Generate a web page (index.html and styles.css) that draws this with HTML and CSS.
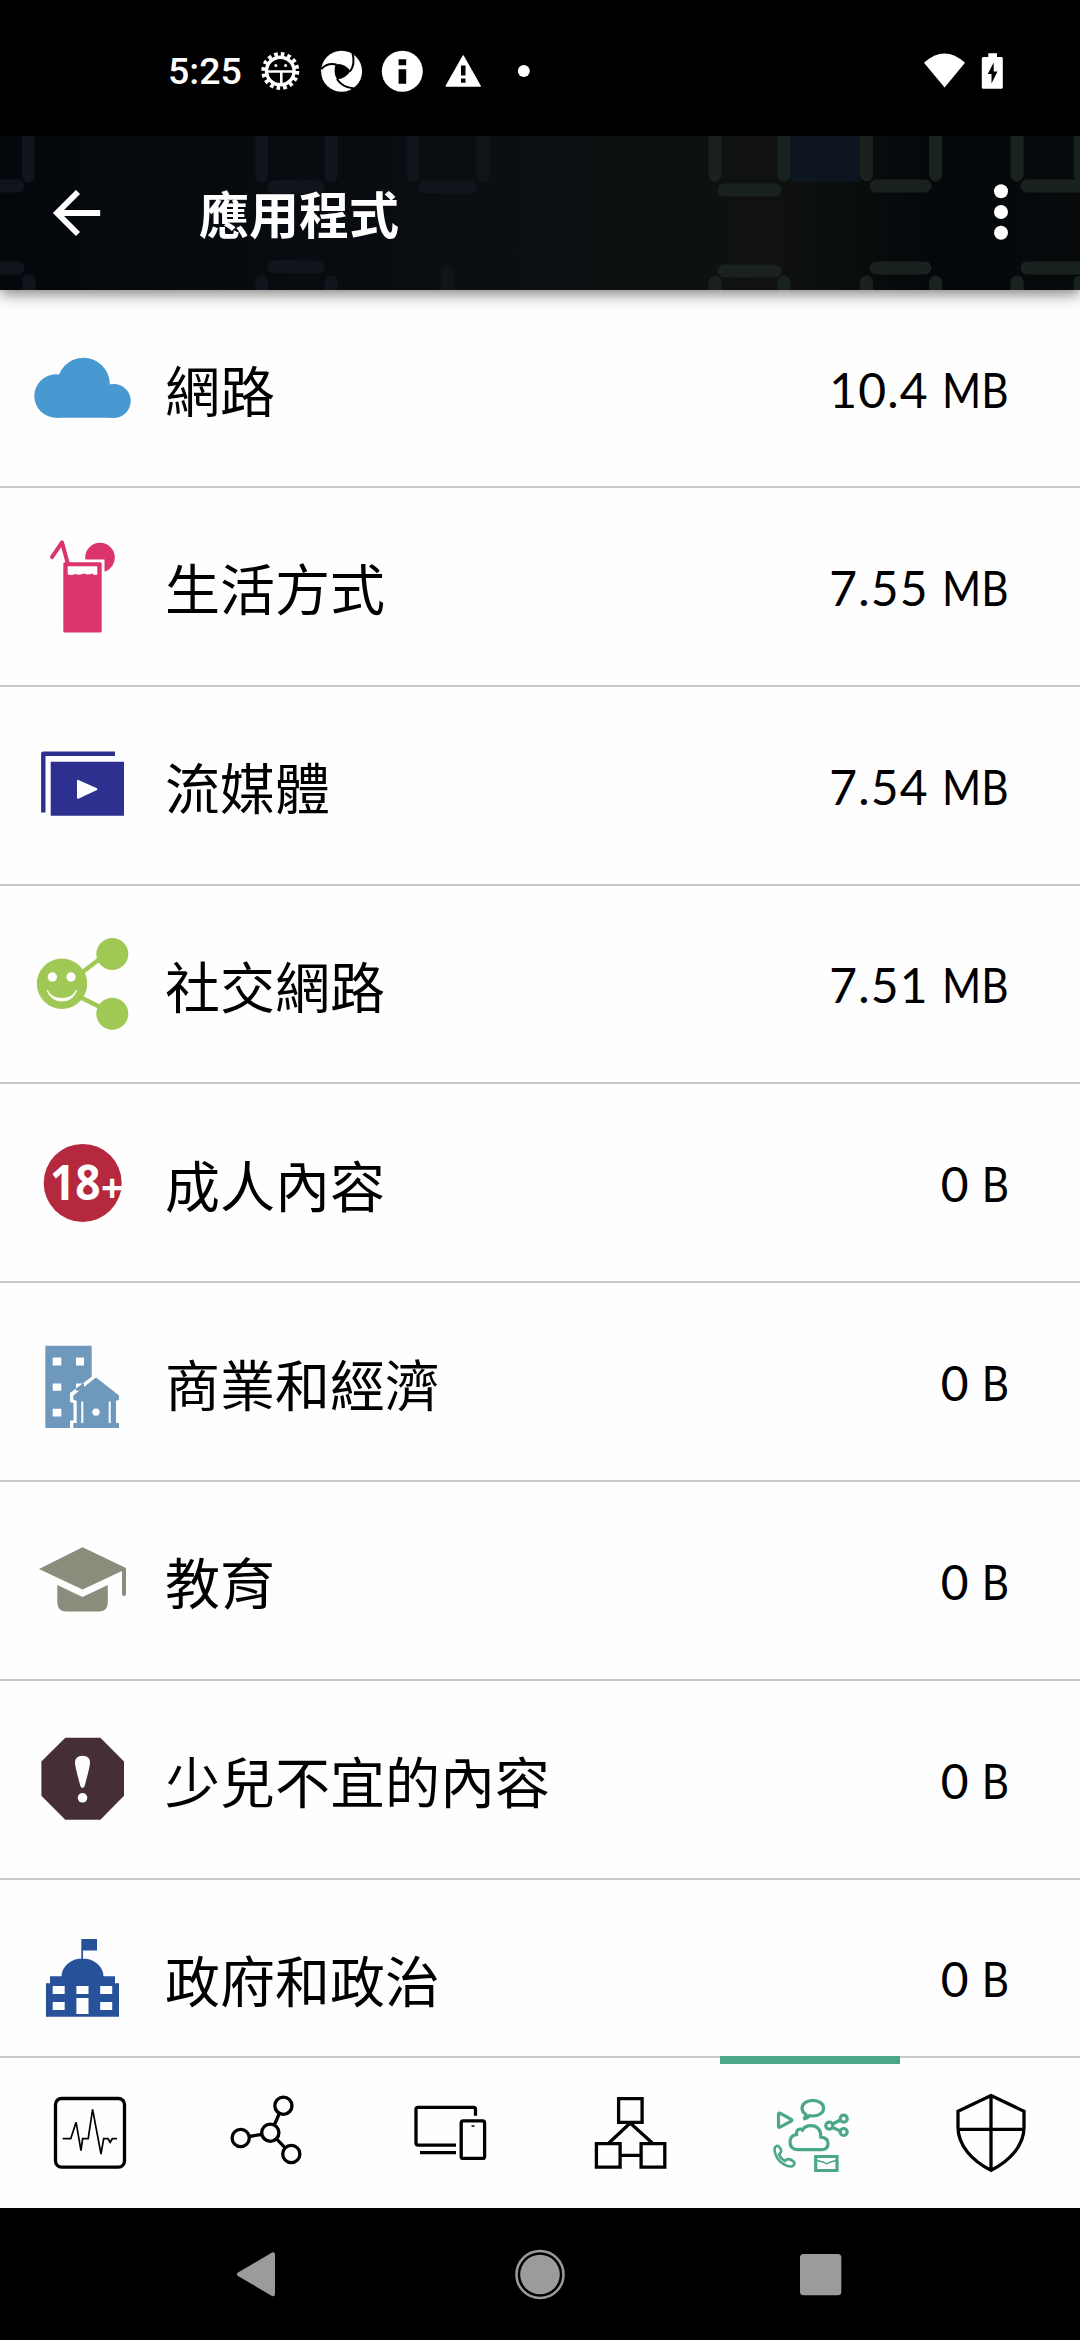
FILE: index.html
```html
<!DOCTYPE html>
<html lang="zh-Hant">
<head>
<meta charset="utf-8">
<title>應用程式</title>
<link rel="stylesheet" href="styles.css">
</head>
<body>
<div class="screen">
  <div class="status">
    <span class="time">5:25</span>
    <svg class="st" viewBox="250 41 61 60"><circle cx="280.3" cy="71" r="16.800" fill="none" stroke="#fff" stroke-width="4.400" stroke-dasharray="3.600 2.997"/><circle cx="280.3" cy="71" r="13.800" fill="none" stroke="#fff" stroke-width="3.400"/><path d="M267 71.500h26.600M281.300 72v13" stroke="#fff" stroke-width="2.600"/><circle cx="275.800" cy="65.500" r="1.500" fill="#fff"/><circle cx="285.600" cy="65.500" r="1.500" fill="#fff"/></svg>
    <svg class="st" viewBox="311 41 61 60"><circle cx="341.600" cy="71.300" r="20.500" fill="#fff"/><path d="M335.500 64.500q8-2 15 6.500q-4 7-13.500 8.500q-4-7-1.500-15z" fill="#000"/><path d="M321.500 69q5.500-6.500 15-4.500M350 71.500q5.500-7 2.500-18.500M337 79q5 8.500 17 9.500" fill="none" stroke="#000" stroke-width="2"/></svg>
    <svg class="st" viewBox="372 41 61 60"><circle cx="402.300" cy="71.300" r="20.500" fill="#fff"/><path d="M398.600 59.300h7.600v6h-7.600zM398.600 69.300h7.600v14.500h-7.600z" fill="#000"/></svg>
    <svg class="st" viewBox="433 41 61 60"><path d="M463.200 56l17 30h-34z" fill="#fff" stroke="#fff" stroke-width="1.500" stroke-linejoin="round"/><path d="M461 65.500h4.500v10H461zM461 78.500h4.500v4.300H461z" fill="#000"/></svg>
    <svg class="st" viewBox="494 41 61 60"><circle cx="523.800" cy="71" r="6" fill="#fff"/></svg>
    <svg class="st end" viewBox="914 41 61 60"><path d="M924 62.700q20.500-18.500 41 0l-20.400 24.800z" fill="#fff"/></svg>
    <svg class="st" viewBox="975 41 61 60"><path d="M988.300 53.300h8.700v3.700h4.300q1.500 0 1.500 1.500v28.700q0 1.500-1.500 1.500h-18q-1.500 0-1.500-1.500V58.500q0-1.500 1.500-1.500h5z" fill="#fff"/><path d="M993.700 62.500l-6 11.500h3.800v9.500l6-12h-3.800z" fill="#000"/></svg>
  </div>

  <header class="bar">
    <svg class="deco" viewBox="0 136 1080 154">
      <g fill="none" stroke="#10151b" stroke-width="13" stroke-linecap="round">
        <path d="M28.600 130v46M0 186h18M0 268h18M29 280v20"/>
        <path d="M261.700 130v46M331.300 130v46M274 187h44M274 267h44M261.700 282v20M331.300 282v20M413 130v46M483 130v46M425 187h46M447.700 272v30"/>
      </g>
      <g fill="#0d1520"><path d="M790 136h70v46h-70z"/></g>
      <g fill="none" stroke="#1a221f" stroke-width="13" stroke-linecap="round">
        <path d="M715 130v45M784 130v45M866.500 130v45M935.700 130v45M1017 130v45M1080 130v45"/>
        <path d="M724 190h51M876 186h49M1027 186h53M724 271h51M876 268h49M1027 268h53"/>
        <path d="M715 282v20M784 282v20M866.500 282v20M935.700 282v20M1017 282v20M1080 282v20"/>
      </g>
    </svg>
    <svg class="back" viewBox="40 183 80 60"><path d="M100.200 213H57M78 192L57 213l21 21" fill="none" stroke="#fff" stroke-width="5.800"/></svg>
    <h1 class="title">應用程式</h1>
    <svg class="more" viewBox="981 183 40 60"><g fill="#fff"><circle cx="1001" cy="191.200" r="7"/><circle cx="1001" cy="212" r="7"/><circle cx="1001" cy="232.800" r="7"/></g></svg>
  </header>

  <main class="list">
    <div class="row">
      <svg class="ic" viewBox="28 328 110 120"><g fill="#4898d2"><circle cx="56" cy="396" r="21.700"/><circle cx="83.500" cy="384" r="26.300"/><circle cx="113.700" cy="401" r="17"/><path d="M56 390h58v27.700H56z"/></g></svg>
      <span class="name">網路</span><span class="val size">10.4 <span class="unit">MB</span></span>
    </div>
    <div class="row">
      <svg class="ic" viewBox="28 526.400 110 120"><circle cx="100" cy="558" r="14.800" fill="#db356c"/><path d="M60 560h44.500v76H60z" fill="#fefefe"/><path d="M52 557.500L62 542.700l6 22" fill="none" stroke="#db356c" stroke-width="4" stroke-linejoin="round" stroke-linecap="round"/><rect x="63.300" y="562.700" width="38.400" height="70.300" rx="1.500" fill="#db356c"/><path d="M67.700 566.700h29.600v8.300q-4 1-5-1-5 2-8 0-5 2-9 .500-4 1.500-7.600.500z" fill="#fefefe"/></svg>
      <span class="name">生活方式</span><span class="val size">7.55 <span class="unit">MB</span></span>
    </div>
    <div class="row">
      <svg class="ic" viewBox="28 725.200 110 120"><path d="M43.300 812.700V754H115" fill="none" stroke="#2d308e" stroke-width="4.400" stroke-linejoin="round"/><path d="M50.700 762H124v54H50.700z" fill="#2d308e"/><path d="M78 781v17l18.500-8.700z" fill="#fefefe" stroke="#fefefe" stroke-width="2" stroke-linejoin="round"/></svg>
      <span class="name">流媒體</span><span class="val size">7.54 <span class="unit">MB</span></span>
    </div>
    <div class="row">
      <svg class="ic" viewBox="28 924 110 120"><path d="M80 974l25-19M78 996l28 14" stroke="#9fc954" stroke-width="4.500"/><g fill="#9fc954"><circle cx="62" cy="983.700" r="25.200"/><circle cx="112.300" cy="954" r="16"/><circle cx="112.300" cy="1013.700" r="16"/></g><g fill="#fefefe"><circle cx="52.400" cy="977" r="4.700"/><circle cx="71" cy="977" r="4.700"/><path d="M47 990q4.500 8.500 15 8.500t14.700-8.500q-3.500 11-14.700 11T47 990z" stroke="#fefefe"/></g></svg>
      <span class="name">社交網路</span><span class="val size">7.51 <span class="unit">MB</span></span>
    </div>
    <div class="row">
      <svg class="ic" viewBox="28 1122.800 110 120"><circle cx="82.700" cy="1182.700" r="39" fill="#b5293f"/><text class="age" x="50" y="1200" textLength="50.500" lengthAdjust="spacingAndGlyphs">18</text><text class="age plus" x="101" y="1201.500">+</text></svg>
      <span class="name">成人內容</span><span class="val">0 <span class="unit">B</span></span>
    </div>
    <div class="row">
      <svg class="ic" viewBox="28 1321.600 110 120"><path d="M45.300 1345.300h46.400v82.400H45.300z" fill="#6f98bd"/><path d="M52.700 1357h8.600v8h-8.600zM76 1357h8v8h-8zM52.700 1383h8.600v7.300h-8.600zM76 1383h8v7.300h-8zM52.700 1408.300h8.600v7.700h-8.600zM96 1373l-26 19.500v9l3.500 1v17.500h-3.500v10h52v-38z" fill="#fefefe"/><path d="M96 1377l23 18v4l-3 1.500v22h3v5.200H73.300v-5.200h3.400v-22l-3.400-1.500v-4z" fill="#6f98bd"/><path d="M81.300 1401h2v21.700h-2zM108.700 1401h2v21.700h-2z" fill="#fefefe"/><circle cx="96" cy="1411.700" r="3.700" fill="#fefefe"/></svg>
      <span class="name">商業和經濟</span><span class="val">0 <span class="unit">B</span></span>
    </div>
    <div class="row">
      <svg class="ic" viewBox="28 1520.400 110 120"><g fill="#8a8c7c"><path d="M82.500 1547.700L126 1568.500v26q0 2-2 2t-2-2v-23L82.500 1590 39 1569.300z"/><path d="M57.300 1585.300l25.200 12 25.300-12v17.700q0 9-9 9H66.300q-9 0-9-9z"/></g></svg>
      <span class="name">教育</span><span class="val">0 <span class="unit">B</span></span>
    </div>
    <div class="row">
      <svg class="ic" viewBox="28 1719.200 110 120"><path d="M65.300 1738h35.100l23.600 23.700v34.300l-23.600 24H65.300l-23.900-24v-34.300z" fill="#462e38"/><path d="M75 1763q0-7 7.500-7t7.500 7q0 4-5.500 23.500-2 3.500-4 0Q75 1767 75 1763z" fill="#fefefe"/><circle cx="82.500" cy="1798" r="4.800" fill="#fefefe"/></svg>
      <span class="name">少兒不宜的內容</span><span class="val">0 <span class="unit">B</span></span>
    </div>
    <div class="row">
      <svg class="ic" viewBox="28 1918 110 120"><path d="M81.300 1939H97v11.500H83v9h-1.700zM61.500 1976.500a21 18 0 0 1 42 0zM50 1976.300h65v7h4v33.400H46v-33.400h4z" fill="#27529a"/><path d="M52.700 1986h12v8h-12zM76.400 1986h12.100v8H76.400zM100.200 1986h12v8h-12zM52.700 2002h12v8h-12zM100.200 2002h12v8h-12zM76.400 1998h12.100v16H76.400z" fill="#fefefe"/></svg>
      <span class="name">政府和政治</span><span class="val">0 <span class="unit">B</span></span>
    </div>
  </main>

  <nav class="tabs">
    <svg class="tab" viewBox="0 2058 180 150"><rect x="55.500" y="2098.500" width="69" height="68.600" rx="6"/><path stroke-width="1.700" d="M62.700 2138.700h8l5.400-16.400 4.900 28.400 1.600-12h5.600l4.400-29.400 8.400 44.700 2.700-15.300h4.300l2.200 3.600 2.100-3.600h4.700"/></svg>
    <svg class="tab" viewBox="180 2058 180 150"><circle cx="283.400" cy="2105.700" r="8.600"/><circle cx="240.700" cy="2138" r="8.600"/><circle cx="270.300" cy="2132.700" r="8.600"/><circle cx="291.300" cy="2154" r="8.600"/><path d="M274.300 2125l5-11.500M261.800 2134.300l-12.700 2.200M276.500 2138.800l8.700 9"/></svg>
    <svg class="tab" viewBox="360 2058 180 150"><path d="M456 2145.100h-38q-2 0-2-2v-33.800q0-2 2-2h55.500q2 0 2 2v6.500M420 2152.700h36"/><rect x="461.200" y="2120.900" width="23.400" height="37.500" rx="2"/><path stroke-width="1.500" d="M471.500 2126h3"/></svg>
    <svg class="tab" viewBox="540 2058 180 150"><path d="M618.600 2098.600h23.500v23.700h-23.500zM596.400 2143.600h23.700v23.500h-23.700zM641.100 2143.600h23.700v23.500h-23.700zM620 2155.300h21M608.900 2143l21.300-20 22.100 20"/></svg>
    <svg class="tab on" viewBox="720 2056 180 152">
      <path d="M806 2114.500q-4-2.500-4-6.300c0-4.500 4.700-7.800 10.800-7.800s10.800 3.300 10.800 7.800-4.700 7.800-10.800 7.800q-1.800 0-3.300-.400-2 2.800-6 3.300 2.700-1.800 2.500-4.400z"/>
      <path d="M778.500 2114q0-1.500 1.500-.800l11.200 6.200q1.300.900 0 1.700l-11.200 6q-1.500.800-1.500-.800z"/>
      <path d="M797 2149.700q-7-.800-7-7.700 0-6.500 6.500-7.300-.500-5.700 4-5.500 1-.200 2 .800 2.500-4.300 8.500-4.300 8.200 0 9.700 8.500v3q7.300.500 7.300 6.300 0 5.700-5.700 6.200z"/>
      <path d="M832.500 2124l8-4M832.500 2127.500l8 3.500"/><circle cx="829.300" cy="2125.700" r="3.500"/><circle cx="843.700" cy="2118.700" r="3.500"/><circle cx="843.700" cy="2132" r="3.500"/>
      <path stroke-width="2.600" d="M774.500 2148.500q1.500-3.500 4-2.300 4 4.300 2 6.800l-1.500 1.500q2 4.500 6 6.500l2.300-1.700q3-.800 7 3 .800 2.700-2.800 4.200-5 .300-11.500-5-5.500-6-5.500-13z"/>
      <path d="M815.700 2156.500h21.300v14h-21.300z"/><path stroke-width="1.400" d="M817 2160.500l6 1.500 3.700 1.800 3.700-1.800 6-1.500"/>
    </svg>
    <svg class="tab" viewBox="900 2058 180 150"><path d="M991 2095.500l33 15.800v16c0 18-14 33.500-33 43-19-9.500-33-25-33-43v-16zM991 2096v74M958.500 2129.300h65"/></svg>
  </nav>

  <footer class="sys">
    <svg class="key" viewBox="206 2244 100 60"><path d="M239 2274.300l34-20v40z" fill="#9b9b9b" stroke="#9b9b9b" stroke-width="4" stroke-linejoin="round"/></svg>
    <svg class="key" viewBox="490 2244 100 60"><circle cx="540" cy="2274.500" r="23.500" fill="none" stroke="#9b9b9b" stroke-width="2.500"/><circle cx="540" cy="2274.500" r="19.800" fill="#9b9b9b"/></svg>
    <svg class="key" viewBox="771 2244 100 60"><rect x="800" y="2254" width="41.300" height="41.300" rx="3.500" fill="#9b9b9b"/></svg>
  </footer>
</div>
</body>
</html>
```
FILE: styles.css
```css
* { box-sizing: border-box; }
body { margin: 0; background: #000; }
svg { display: block; flex: none; }

.screen {
  width: 1080px;
  height: 2340px;
  display: flex;
  flex-direction: column;
  overflow: hidden;
  background: #fefefe;
  font-family: Lato, "Noto Sans CJK TC", sans-serif;
  color: #000;
}

.status {
  height: 136px;
  flex: none;
  display: flex;
  align-items: center;
  padding: 6px 44px 0 168px;
  background: #000;
}
.time {
  width: 82px;
  font: 500 37.5px/44px Roboto, sans-serif;
  color: #fff;
}
.st { width: 61px; height: 60px; }
.end { margin-left: auto; }

.bar {
  position: relative;
  z-index: 1;
  height: 154px;
  flex: none;
  display: flex;
  align-items: center;
  padding: 0 59px 0 40px;
  background: linear-gradient(90deg, #04070b 0%, #080b10 30%, #0b0f12 45%, #0f1210 72%, #03070a 88%, #080b0c 100%);
  box-shadow: 0 4px 14px rgba(0, 0, 0, 0.5);
}
.deco {
  position: absolute;
  inset: 0;
  width: 1080px;
  height: 154px;
}
.back { position: relative; width: 80px; height: 60px; }
.title {
  position: relative;
  margin: 0 auto 2px 79px;
  font: 700 50px/60px "Noto Sans CJK TC", sans-serif;
  color: #fff;
}
.more { position: relative; width: 40px; height: 60px; }

.list { height: 1766px; flex: none; overflow: hidden; }
.row {
  height: 198.8px;
  display: flex;
  align-items: center;
  padding: 0 71px 0 28px;
  border-bottom: 2px solid #c9c9c9;
}
.row:first-child { height: 198px; }
.ic { width: 110px; height: 120px; }
.name {
  margin-left: 27px;
  font: 400 55px/80px "Noto Sans CJK TC", sans-serif;
}
.val {
  margin-left: auto;
  padding-top: 3px;
  font-size: 48px;
  line-height: 60px;
  white-space: nowrap;
}
.size { letter-spacing: 1.2px; }
.unit {
  display: inline-block;
  margin-left: -3px;
  letter-spacing: 0;
  transform: scaleX(0.88);
  transform-origin: right;
}
.size .unit { margin-left: -9px; }
.age { font: 700 48px "Open Sans", sans-serif; fill: #fff; }
.plus { font-size: 39px; }

.tabs {
  height: 152px;
  flex: none;
  display: flex;
  border-top: 2px solid #c9c9c9;
}
.tab {
  width: 180px;
  height: 150px;
  fill: none;
  stroke: #000;
  stroke-width: 3.3;
}
.on {
  margin-top: -2px;
  height: 152px;
  background: linear-gradient(#4ba786 8px, transparent 8px);
  stroke: #4ba786;
  stroke-width: 3.2;
}

.sys {
  flex: 1;
  display: flex;
  align-items: center;
  gap: 184px;
  padding-left: 206px;
  background: #000;
}
.key { width: 100px; height: 60px; }
.key:last-child { margin-left: -3px; }
```
